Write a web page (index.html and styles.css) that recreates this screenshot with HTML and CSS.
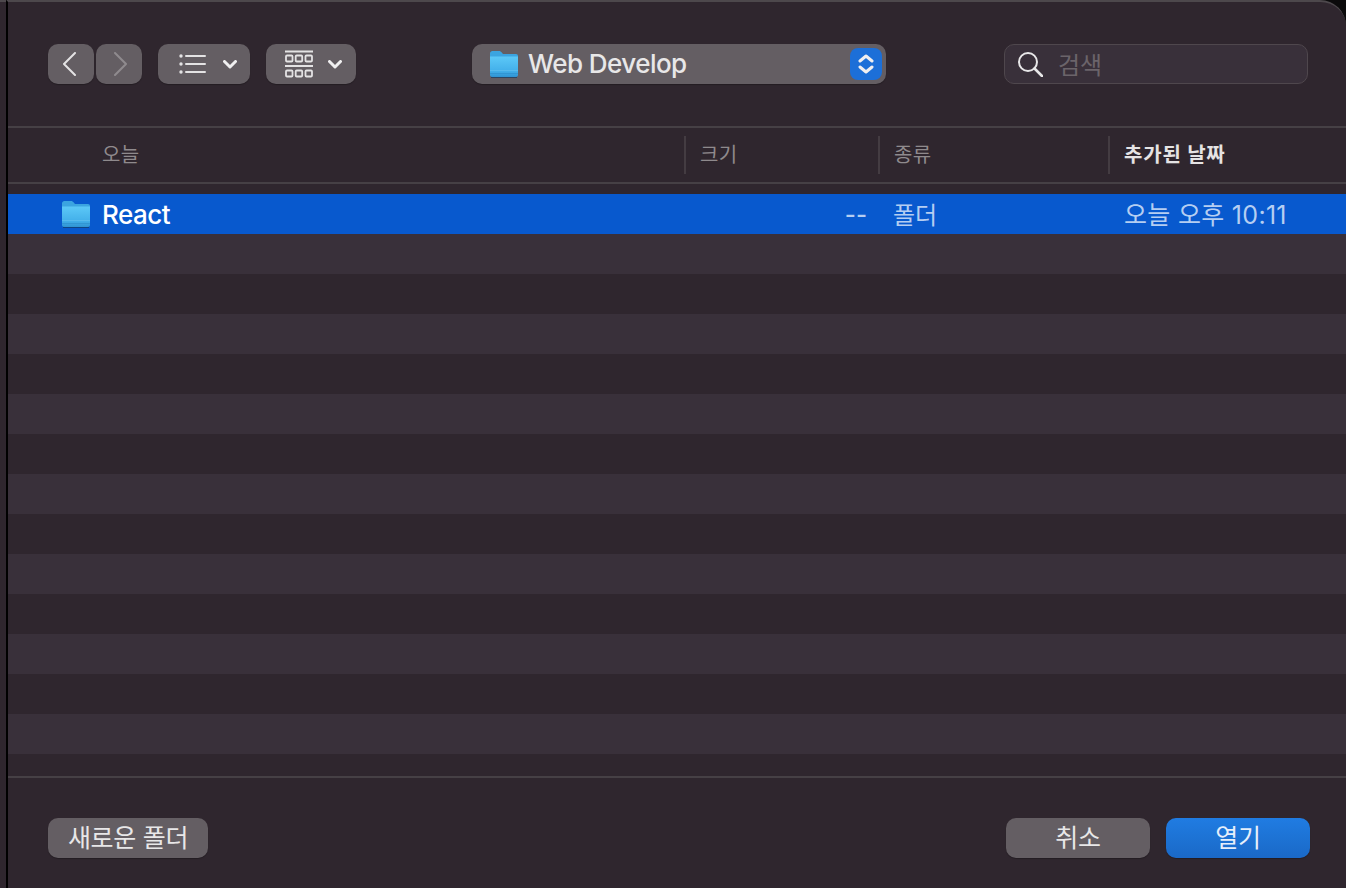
FILE: index.html
```html
<!DOCTYPE html>
<html lang="ko">
<head>
    <meta charset="UTF-8">
    <title>열기</title>
    <link rel="stylesheet" href="styles.css">
</head>
<body>
    <svg class="defs" width="0" height="0">
        <defs>
            <linearGradient id="folderBody" x1="0" y1="0" x2="0" y2="1">
                <stop offset="0" stop-color="#5cc8f7"/>
                <stop offset="0.7" stop-color="#43b0ea"/>
                <stop offset="1" stop-color="#2f93d2"/>
            </linearGradient>
            <symbol id="folder" viewBox="0 0 30 28">
                <path d="M1 3.500C1 2 2 1 3.500 1h6.500c1 0 1.600.4 2.300 1.100L14 4h13c1.200 0 2 .8 2 2v3H1z" fill="#3ba4e0"/>
                <path d="M1 6.500h28V25c0 1.200-.8 2-2 2H3c-1.200 0-2-.8-2-2z" fill="url(#folderBody)"/>
                <rect x="1" y="20" width="28" height="1" fill="#6cc4ee" opacity=".5"/>
                <rect x="1" y="23" width="28" height="1" fill="#2788c6" opacity=".5"/>
                <rect x="2" y="27" width="26" height="1" fill="#123a63" opacity=".7"/>
            </symbol>
        </defs>
    </svg>

    <div class="screen">
        <div class="edge"></div>
        <div class="dialog">
            <div class="toolbar">
                <div class="btn nav-btn nav-prev">
                    <svg width="14" height="24" viewBox="0 0 14 24"><path d="M13 1 2 12l11 11" class="line"/></svg>
                </div>
                <div class="btn nav-btn nav-next">
                    <svg width="14" height="24" viewBox="0 0 14 24"><path d="M1 1l11 11L1 23" class="line line-dim"/></svg>
                </div>
                <div class="btn view-btn list-btn">
                    <svg width="28" height="20" viewBox="0 0 28 20">
                        <circle cx="3" cy="2" r="1.700" fill="#e4e3e4"/>
                        <circle cx="3" cy="10" r="1.700" fill="#e4e3e4"/>
                        <circle cx="3" cy="18" r="1.700" fill="#e4e3e4"/>
                        <path d="M8 2h19M8 10h19M8 18h19" class="line"/>
                    </svg>
                    <svg class="chevron" width="14" height="9" viewBox="0 0 14 9"><path d="M1.500 1.500 7 7l5.500-5.500" class="line line-bold"/></svg>
                </div>
                <div class="btn view-btn grid-btn">
                    <svg width="28" height="28" viewBox="0 0 28 28">
                        <path d="M0 1.500h28M0 16h28" class="line"/>
                        <rect x="1" y="5.500" width="6.500" height="6" rx="1" class="box"/>
                        <rect x="10.700" y="5.500" width="6.500" height="6" rx="1" class="box"/>
                        <rect x="20.500" y="5.500" width="6.500" height="6" rx="1" class="box"/>
                        <rect x="1" y="20.500" width="6.500" height="6" rx="1" class="box"/>
                        <rect x="10.700" y="20.500" width="6.500" height="6" rx="1" class="box"/>
                        <rect x="20.500" y="20.500" width="6.500" height="6" rx="1" class="box"/>
                    </svg>
                    <svg class="chevron" width="14" height="9" viewBox="0 0 14 9"><path d="M1.500 1.500 7 7l5.500-5.500" class="line line-bold"/></svg>
                </div>
                <div class="btn path-popup">
                    <svg class="path-folder" width="30" height="28"><use href="#folder"/></svg>
                    <span class="path-name">Web Develop</span>
                    <div class="stepper">
                        <svg width="16" height="20" viewBox="0 0 16 20">
                            <path d="M2 7l6-5 6 5M2 13l6 5 6-5" class="line line-bold"/>
                        </svg>
                    </div>
                </div>
                <div class="search">
                    <svg width="26" height="26" viewBox="0 0 26 26">
                        <circle cx="11" cy="11" r="9" fill="none" stroke="#e8e7e8" stroke-width="2"/>
                        <path d="M17.500 17.500 25 25" stroke="#e8e7e8" stroke-width="2.600" stroke-linecap="round"/>
                    </svg>
                    <span class="search-text">검색</span>
                </div>
            </div>

            <div class="head">
                <div class="col col-name">오늘</div>
                <div class="col col-sep">크기</div>
                <div class="col col-sep">종류</div>
                <div class="col col-sep col-sorted">추가된 날짜</div>
            </div>

            <div class="list">
                <div class="row row-selected">
                    <div class="cell-name">
                        <svg width="30" height="28"><use href="#folder"/></svg>
                        <span>React</span>
                    </div>
                    <div class="cell-size">--</div>
                    <div class="cell-kind">폴더</div>
                    <div class="cell-date">오늘 오후 10:11</div>
                </div>
                <div class="row"></div>
                <div class="row"></div>
                <div class="row"></div>
                <div class="row"></div>
                <div class="row"></div>
                <div class="row"></div>
                <div class="row"></div>
                <div class="row"></div>
                <div class="row"></div>
                <div class="row"></div>
                <div class="row"></div>
                <div class="row"></div>
                <div class="row"></div>
            </div>

            <div class="footer">
                <div class="btn foot-btn new-folder">새로운 폴더</div>
                <div class="foot-right">
                    <div class="btn foot-btn">취소</div>
                    <div class="btn foot-btn btn-primary">열기</div>
                </div>
            </div>
        </div>
    </div>
</body>
</html>
```

FILE: styles.css
```css
* { box-sizing: border-box; }
html, body { margin: 0; padding: 0; height: 100%; overflow: hidden; }
body { background-color: #0b0a0b; font-family: Inter, "Noto Sans CJK KR", sans-serif; color: #e6e5e6; }
.defs { display: block; height: 0; }

.screen { display: flex; width: 1346px; height: 888px; }
.edge { width: 6px; background-color: #2f262e; border-top: 2px solid #4d484c; flex: none; }
.dialog { width: 1340px; height: 888px; background-color: #2f262e; border-left: 2px solid #000; border-top: 2px solid #4d484c; border-top-right-radius: 26px; display: flex; flex-direction: column; overflow: hidden; }

/* shared icon strokes */
.line { fill: none; stroke: #e4e3e4; stroke-width: 2; stroke-linecap: round; stroke-linejoin: round; }
.line-dim { stroke: #8f8b8e; }
.line-bold { stroke-width: 3; stroke: #f0eff0; }
.box { fill: none; stroke: #e4e3e4; stroke-width: 1.800; }

.btn { display: flex; align-items: center; justify-content: center; height: 40px; background-color: #645e63; border-radius: 10px; box-shadow: 0 1px 1px rgba(0,0,0,0.25); }

/* toolbar */
.toolbar { height: 126px; flex: none; display: flex; align-items: flex-start; padding: 42px 0 0 40px; border-bottom: 2px solid #464045; }
.nav-btn { width: 46px; }
.nav-prev { padding-right: 4px; }
.nav-next { margin-left: 2px; padding-left: 3px; }
.view-btn { margin-left: 16px; }
.list-btn { width: 92px; gap: 17px; padding-left: 6px; }
.grid-btn { width: 90px; gap: 15px; padding-left: 5px; }
.chevron { margin-top: 1px; }
.path-popup { width: 414px; margin-left: 116px; padding: 0 4px 0 17px; justify-content: flex-start; }
.path-folder { flex: none; }
.path-name { flex: 1; margin-left: 9px; padding-bottom: 2px; font-size: 26px; font-weight: 500; letter-spacing: -0.55px; color: #e8e7e8; white-space: nowrap; }
.stepper { width: 32px; height: 32px; border-radius: 8px; background-color: #1c6fd8; display: flex; align-items: center; justify-content: center; }
.search { width: 304px; height: 40px; margin-left: 118px; padding-left: 12px; display: flex; align-items: center; gap: 15px; background-color: #39303a; border: 1px solid #4f474d; border-radius: 10px; }
.search-text { font-size: 24px; padding-bottom: 2px; color: #6b646a; }

/* column header */
.head { height: 56px; flex: none; display: grid; grid-template-columns: 676px 194px 230px 238px; align-items: center; border-bottom: 2px solid #464045; font-size: 20px; letter-spacing: 0.4px; color: #8f8a8d; }
.col { height: 38px; line-height: 38px; padding-left: 14px; white-space: nowrap; }
.col-name { padding-left: 94px; }
.col-sep { border-left: 2px solid #443c42; }
.col-sorted { font-weight: 700; letter-spacing: 0.8px; color: #e5e3e4; }

/* file list */
.list { height: 594px; flex: none; padding-top: 10px; overflow: hidden; border-bottom: 2px solid #464045; }
.row { height: 40px; display: grid; grid-template-columns: 676px 194px 230px 238px; align-items: center; font-size: 24px; white-space: nowrap; }
.row:nth-child(even) { background-color: #39303a; }
.row-selected { background-color: #0859ce; color: #b5cef2; }
.cell-name { display: flex; align-items: center; gap: 11px; padding-left: 53px; color: #fff; font-size: 26px; font-weight: 500; letter-spacing: -0.5px; }
.cell-size { text-align: right; padding-right: 11px; font-weight: 500; }
.cell-kind { padding-left: 15px; padding-bottom: 2px; }
.cell-date { padding-left: 16px; padding-bottom: 2px; font-size: 25px; letter-spacing: 0.3px; }

/* footer */
.footer { flex: 1; display: flex; justify-content: space-between; align-items: flex-start; padding: 40px 36px 0 40px; }
.foot-right { display: flex; gap: 16px; }
.foot-btn { width: 144px; padding-bottom: 4px; font-size: 25px; letter-spacing: -0.3px; color: #e8e7e8; }
.new-folder { width: 160px; }
.btn-primary { background: linear-gradient(#207ce2, #1a69c7); color: #e6effb; }
```
